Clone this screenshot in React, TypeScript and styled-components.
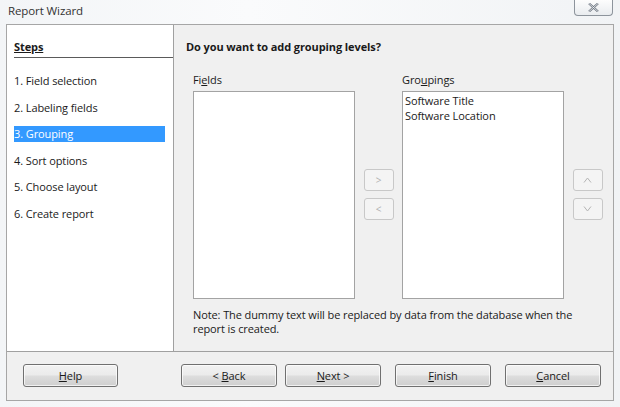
import styled, { createGlobalStyle } from "styled-components";

const GlobalStyle = createGlobalStyle`
  html, body {
    margin: 0;
    padding: 0;
    background: #eef0f2;
  }
  * {
    box-sizing: border-box;
  }
`;

const steps = [
  "1. Field selection",
  "2. Labeling fields",
  "3. Grouping",
  "4. Sort options",
  "5. Choose layout",
  "6. Create report",
];

const groupings = ["Software Title", "Software Location"];

export default function App() {
  return (
    <>
      <GlobalStyle />
      <Window>
        <TitleBar>
          <Title>Report Wizard</Title>
          <CloseButton aria-label="Close">
            <svg width="11" height="9" viewBox="0 0 11 9">
              <path
                d="M1 0.5 L10 8.5 M10 0.5 L1 8.5"
                stroke="#6d7580"
                strokeWidth="2.2"
                fill="none"
              />
              <path
                d="M1 0.5 L10 8.5 M10 0.5 L1 8.5"
                stroke="#f4f6f8"
                strokeWidth="0.8"
                fill="none"
              />
            </svg>
          </CloseButton>
        </TitleBar>
        <Client>
          <Main>
            <StepsPanel>
              <StepsHeader>Steps</StepsHeader>
              <StepList>
                {steps.map((s, i) => (
                  <Step key={s} $active={i === 2}>
                    {s}
                  </Step>
                ))}
              </StepList>
            </StepsPanel>
            <Content>
              <Question>Do you want to add grouping levels?</Question>
              <Lists>
                <ListColumn>
                  <ListLabel>
                    Fi<u>e</u>lds
                  </ListLabel>
                  <ListBox />
                </ListColumn>
                <ArrowColumn>
                  <SmallButton disabled>&gt;</SmallButton>
                  <SmallButton disabled>&lt;</SmallButton>
                </ArrowColumn>
                <ListColumn>
                  <ListLabel>
                    Gro<u>u</u>pings
                  </ListLabel>
                  <ListBox>
                    {groupings.map((g) => (
                      <ListItem key={g}>{g}</ListItem>
                    ))}
                  </ListBox>
                </ListColumn>
                <ArrowColumn>
                  <SmallButton disabled>
                    <svg width="9" height="6" viewBox="0 0 9 6">
                      <path d="M1 5.5 L4.5 1 L8 5.5" stroke="#b4b4b4" strokeWidth="1" fill="none" />
                    </svg>
                  </SmallButton>
                  <SmallButton disabled>
                    <svg width="9" height="6" viewBox="0 0 9 6">
                      <path d="M1 0.5 L4.5 5 L8 0.5" stroke="#b4b4b4" strokeWidth="1" fill="none" />
                    </svg>
                  </SmallButton>
                </ArrowColumn>
              </Lists>
              <Note>
                Note: The dummy text will be replaced by data from the database when the
                report is created.
              </Note>
            </Content>
          </Main>
          <ButtonBar>
            <HelpButton>
              <u>H</u>elp
            </HelpButton>
            <NavButtons>
              <PushButton>
                &lt; <u>B</u>ack
              </PushButton>
              <PushButton>
                <u>N</u>ext &gt;
              </PushButton>
              <Spacer />
              <PushButton>
                <u>F</u>inish
              </PushButton>
              <Spacer />
              <PushButton>
                <u>C</u>ancel
              </PushButton>
            </NavButtons>
          </ButtonBar>
        </Client>
      </Window>
    </>
  );
}

const Window = styled.div`
  width: 620px;
  height: 407px;
  display: flex;
  flex-direction: column;
  background: linear-gradient(90deg, #f3f5f7 0%, #fafbfc 40%, #f1f3f5 100%);
  font-family: "Open Sans", "Noto Sans", sans-serif;
  font-size: 11px;
  letter-spacing: -0.1px;
  color: #1a1a1a;
  overflow: hidden;
`;

const TitleBar = styled.div`
  height: 24px;
  display: flex;
  align-items: flex-start;
  justify-content: space-between;
  padding: 0 6px 0 8px;
`;

const Title = styled.div`
  padding-top: 3px;
  font-size: 11.5px;
  color: #333;
`;

const CloseButton = styled.div`
  width: 39px;
  height: 16px;
  margin-right: 1px;
  border: 1px solid #8d949c;
  border-top: none;
  border-radius: 0 0 4px 4px;
  background: linear-gradient(#fdfdfd, #e9ecef);
  display: flex;
  align-items: center;
  justify-content: center;
`;

const Client = styled.div`
  margin: 0 6px;
  height: 377px;
  border: 1px solid #a6a6a6;
  background: #f0f0f0;
  display: flex;
  flex-direction: column;
`;

const Main = styled.div`
  height: 327px;
  display: flex;
  border-bottom: 1px solid #a0a0a0;
`;

const StepsPanel = styled.div`
  width: 167px;
  background: #fff;
  border-right: 1px solid #a0a0a0;
  padding: 13px 0 0 7px;
`;

const StepsHeader = styled.div`
  font-weight: 700;
  text-decoration: underline;
  border-bottom: 1px solid #5a5a5a;
  padding-bottom: 2px;
  line-height: 17px;
`;

const StepList = styled.div`
  display: flex;
  flex-direction: column;
  gap: 10.6px;
  margin-top: 15px;
`;

const Step = styled.div<{ $active?: boolean }>`
  width: 151px;
  height: 16px;
  line-height: 16px;
  background: ${(p) => (p.$active ? "#3399ff" : "transparent")};
  color: ${(p) => (p.$active ? "#fff" : "#1a1a1a")};
`;

const Content = styled.div`
  flex: 1;
  padding: 13px 0 0 12px;
  display: flex;
  flex-direction: column;
`;

const Question = styled.div`
  font-weight: 700;
  line-height: 17px;
`;

const Lists = styled.div`
  display: flex;
  margin-top: 17px;
  padding-left: 7px;
`;

const ListColumn = styled.div`
  display: flex;
  flex-direction: column;
  width: 162px;
`;

const ListLabel = styled.div`
  line-height: 16px;
  margin-bottom: 3px;
`;

const ListBox = styled.div`
  height: 208px;
  background: #fff;
  border: 1px solid #a3a3a3;
  padding: 1px 2px;
`;

const ListItem = styled.div`
  line-height: 15px;
`;

const ArrowColumn = styled.div`
  width: 47px;
  display: flex;
  flex-direction: column;
  align-items: center;
  gap: 7px;
  padding-top: 97px;
`;

const SmallButton = styled.button`
  width: 30px;
  height: 22px;
  padding: 0;
  border: 1px solid #c8c8c8;
  border-radius: 3px;
  background: #f4f4f4;
  color: #b0b0b0;
  font-family: inherit;
  font-size: 10px;
  display: flex;
  align-items: center;
  justify-content: center;
`;

const Note = styled.div`
  margin-top: 9px;
  padding-left: 7px;
  width: 410px;
  line-height: 14px;
`;

const ButtonBar = styled.div`
  flex: 1;
  display: flex;
  align-items: center;
  padding: 0 0 1px 16px;
`;

const PushButton = styled.button`
  width: 96px;
  height: 23px;
  padding: 0;
  border: 1px solid #707070;
  border-radius: 3px;
  background: linear-gradient(#f2f2f2 0%, #ebebeb 48%, #dddddd 52%, #cfcfcf 100%);
  box-shadow: inset 0 0 0 1px rgba(255, 255, 255, 0.7);
  font-family: inherit;
  font-size: 11px;
  letter-spacing: -0.1px;
  color: #1a1a1a;
`;

const HelpButton = styled(PushButton)`
  width: 95px;
`;

const NavButtons = styled.div`
  display: flex;
  gap: 8px;
  margin-left: 63px;
`;

const Spacer = styled.div`
  width: 6px;
  margin-left: -8px;
`;
